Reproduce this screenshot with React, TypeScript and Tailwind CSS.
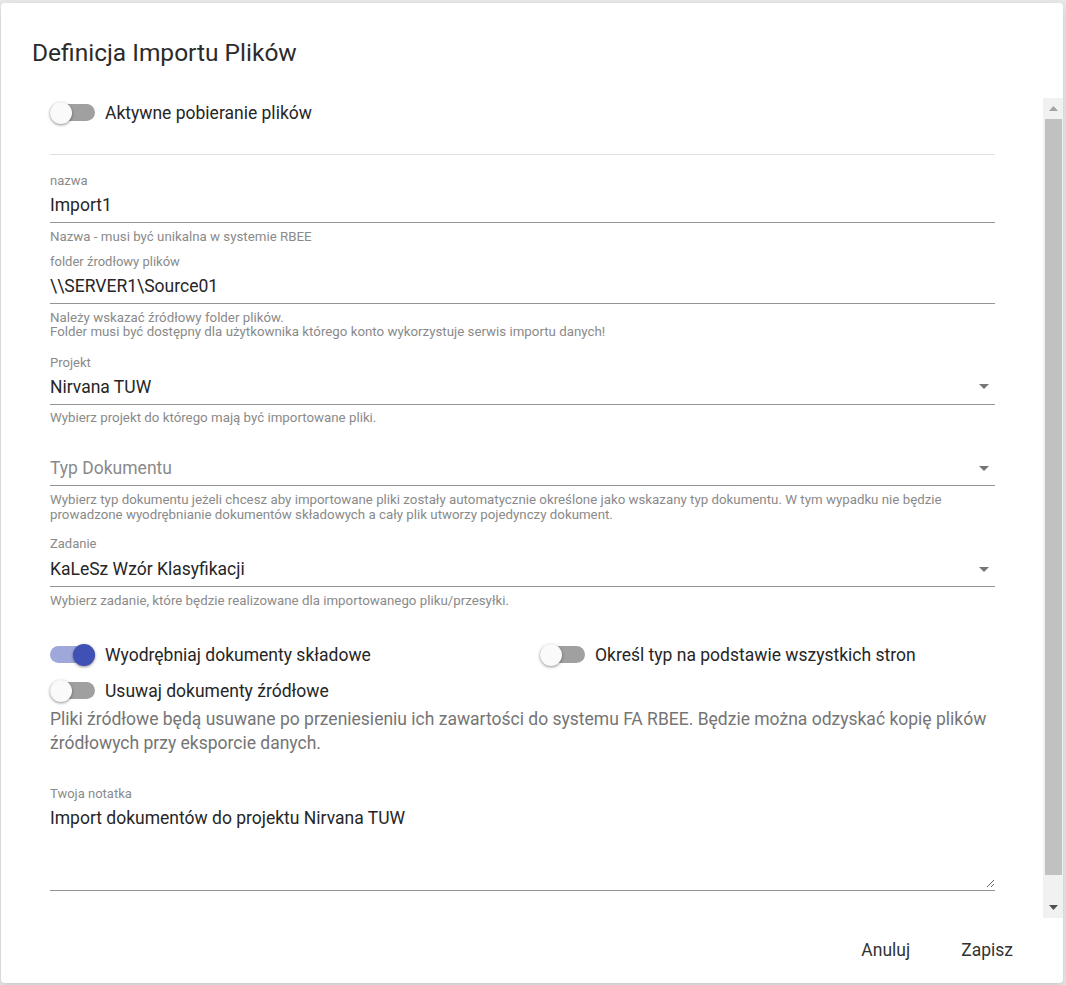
import React from "react";

function Switch({ on }: { on?: boolean }) {
  return (
    <div className="relative h-[24px] w-[45px] shrink-0">
      <div
        className={`absolute left-0 top-[3px] h-[17px] w-[45px] rounded-full ${
          on ? "bg-[#9fa8da]" : "bg-[#a0a0a0]"
        }`}
      />
      <div
        className={`absolute top-[1px] h-[22px] w-[22px] rounded-full shadow-[0_1px_3px_rgba(0,0,0,0.45)] ${
          on ? "left-[23px] bg-[#3f51b5]" : "left-0 bg-[#fafafa]"
        }`}
      />
    </div>
  );
}

function SwitchLabel({ on, label, className = "" }: { on?: boolean; label: string; className?: string }) {
  return (
    <div className={`flex items-center ${className}`}>
      <Switch on={on} />
      <span className="ml-[10px] text-[17.5px] leading-6 text-[#262626]">{label}</span>
    </div>
  );
}

function Arrow() {
  return (
    <svg width="10" height="5" viewBox="0 0 10 5" className="mr-[6px] shrink-0">
      <path d="M0 0l5 5 5-5z" fill="#757575" />
    </svg>
  );
}

function Label({ children, className = "" }: { children: React.ReactNode; className?: string }) {
  return <div className={`text-[13px] leading-4 text-[#8a8a8a] ${className}`}>{children}</div>;
}

function Helper({ children, className = "" }: { children: React.ReactNode; className?: string }) {
  return <div className={`text-[13.3px] leading-[14.5px] text-[#8a8a8a] ${className}`}>{children}</div>;
}

function Row({
  children,
  select,
  className = "",
}: {
  children: React.ReactNode;
  select?: boolean;
  className?: string;
}) {
  return (
    <div className={`flex h-[30px] items-start justify-between border-b border-[#949494] ${className}`}>
      <div className="text-[17.5px] leading-6">{children}</div>
      {select && (
        <div className="flex h-6 items-center">
          <Arrow />
        </div>
      )}
    </div>
  );
}

export default function App() {
  return (
    <div className="h-[985px] w-[1066px] overflow-hidden bg-[#e9e9e9] pl-[1px] pt-[3px] font-['Roboto',_'Noto_Sans',_sans-serif]">
      <div className="flex h-[980px] w-[1062px] flex-col overflow-hidden rounded-[4px] bg-white shadow-[0_4px_12px_rgba(0,0,0,0.15)]">
        <div className="h-[95px] shrink-0 pl-[31px] pt-[34px] text-[24.5px] leading-8 text-[#2b2b2b]">
          Definicja Importu Plików
        </div>

        <div className="flex h-[820px] shrink-0">
          <div className="flex-1 overflow-hidden pl-[49px] pr-[48px] text-[#262626]">
            <div className="flex h-[30px] items-center">
              <SwitchLabel label="Aktywne pobieranie plików" />
            </div>
            <div className="mt-[26px] h-px bg-[#e0e0e0]" />

            <Label className="mt-[18px]">nazwa</Label>
            <Row className="mt-[4px]">Import1</Row>
            <Helper className="mt-[7px]">Nazwa - musi być unikalna w systemie RBEE</Helper>

            <Label className="mt-[9px]">folder źrodłowy plików</Label>
            <Row className="mt-[4px]">\\SERVER1\Source01</Row>
            <Helper className="mt-[7px] leading-[14px]">
              Należy wskazać źródłowy folder plików.
              <br />
              Folder musi być dostępny dla użytkownika którego konto wykorzystuje serwis importu danych!
            </Helper>

            <Label className="mt-[16px]">Projekt</Label>
            <Row select className="mt-[4px]">
              Nirvana TUW
            </Row>
            <Helper className="mt-[6px]">Wybierz projekt do którego mają być importowane pliki.</Helper>

            <Row select className="mt-[31px]">
              <span className="text-[#8a8a8a]">Typ Dokumentu</span>
            </Row>
            <Helper className="mt-[6px] leading-[15px]">
              Wybierz typ dokumentu jeżeli chcesz aby importowane pliki zostały automatycznie określone jako wskazany
              typ dokumentu. W tym wypadku nie będzie prowadzone wyodrębnianie dokumentów składowych a cały plik
              utworzy pojedynczy dokument.
            </Helper>

            <Label className="mt-[14px]">Zadanie</Label>
            <Row select className="mt-[5px]">
              KaLeSz Wzór Klasyfikacji
            </Row>
            <Helper className="mt-[7px]">Wybierz zadanie, które będzie realizowane dla importowanego pliku/przesyłki.</Helper>

            <div className="mt-[28px] grid grid-cols-[490px_1fr]">
              <div className="flex h-[36px] items-center">
                <SwitchLabel on label="Wyodrębniaj dokumenty składowe" />
              </div>
              <div className="flex h-[36px] items-center">
                <SwitchLabel label="Określ typ na podstawie wszystkich stron" />
              </div>
              <div className="flex h-[36px] items-center">
                <SwitchLabel label="Usuwaj dokumenty źródłowe" />
              </div>
            </div>
            <p className="mt-[-2px] text-[17.5px] leading-6 text-[#757575]">
              Pliki źródłowe będą usuwane po przeniesieniu ich zawartości do systemu FA RBEE. Będzie można odzyskać
              kopię plików źródłowych przy eksporcie danych.
            </p>

            <Label className="mt-[31px]">Twoja notatka</Label>
            <div className="mt-[4px] border-b border-[#949494] pb-[2px]">
              <textarea
                defaultValue="Import dokumentów do projektu Nirvana TUW"
                className="block h-[82px] w-full resize-y bg-transparent p-0 text-[17.5px] leading-6 text-[#262626] outline-none"
              />
            </div>
            <div className="h-[40px]" />
          </div>

          {/* scrollbar */}
          <div className="flex w-[20px] shrink-0 flex-col bg-[#f1f1f1]">
            <div className="flex h-[21px] items-center justify-center">
              <svg width="9" height="5" viewBox="0 0 9 5">
                <path d="M0 5l4.5-5 4.5 5z" fill="#a3a3a3" />
              </svg>
            </div>
            <div className="ml-[2px] mr-[1px] h-[756px] bg-[#c1c1c1]" />
            <div className="flex-1" />
            <div className="flex h-[21px] items-center justify-center">
              <svg width="9" height="5" viewBox="0 0 9 5">
                <path d="M0 0l4.5 5 4.5-5z" fill="#505050" />
              </svg>
            </div>
          </div>
        </div>

        <div className="flex flex-1 items-center justify-end gap-[19px] pb-[2px] pr-[34px]">
          <button className="px-4 py-1.5 text-[17.5px] leading-6 text-[#333]">Anuluj</button>
          <button className="px-4 py-1.5 text-[17.5px] leading-6 text-[#333]">Zapisz</button>
        </div>
      </div>
    </div>
  );
}
